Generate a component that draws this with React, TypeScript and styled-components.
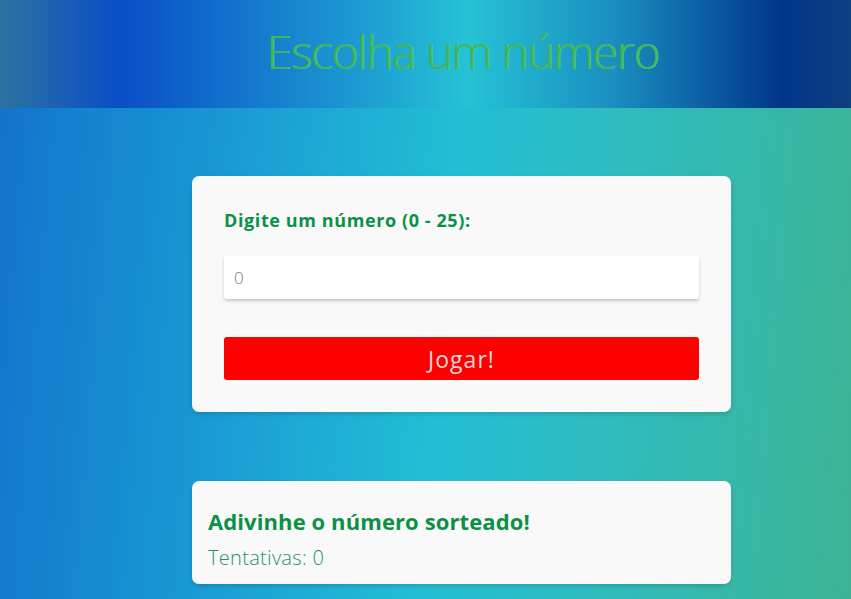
import React from "react";
import styled, { createGlobalStyle } from "styled-components";

const Global = createGlobalStyle`
  html, body { margin: 0; padding: 0; }
  body {
    font-family: "Open Sans", "Noto Sans", sans-serif;
    min-height: 599px;
    background: linear-gradient(95deg, #1272cc 0%, #1a9fd4 30%, #22bed4 52%, #2dbcc0 70%, #3db494 100%);
    background-attachment: fixed;
  }
`;

const Header = styled.header`
  height: 108px;
  background: linear-gradient(90deg, #2c73a0 0%, #0a4ec8 14%, #1a8fd0 38%, #25c2d5 55%, #1a8fc0 72%, #00358a 92%, #0d4080 100%);
  display: flex;
  align-items: center;
  padding-left: 74px;
  justify-content: center;
`;

const Title = styled.h1`
  margin: 0 0 6px;
  font-family: "Open Sans", sans-serif;
  font-weight: 300;
  font-size: 46px;
  letter-spacing: -1.3px;
  color: #45b25a;
  text-shadow: 1px 0 0 #3fcf6a;
`;

const Main = styled.main`
  display: flex;
  flex-direction: column;
  gap: 69px;
  width: 539px;
  margin-left: 192px;
  padding-top: 68px;
`;

const Card = styled.section<{ $pad: string }>`
  background: #f9f9f9;
  border-radius: 7px;
  padding: ${(p) => p.$pad};
  box-shadow: 0 2px 4px rgba(0, 0, 0, 0.15);
  display: flex;
  flex-direction: column;
`;

const Label = styled.label`
  font-family: "Open Sans", sans-serif;
  font-weight: 700;
  font-size: 18px;
  letter-spacing: 0.6px;
  line-height: 24px;
  color: #0a9146;
  margin-bottom: 24px;
`;

const Input = styled.input`
  height: 43px;
  border: none;
  border-radius: 3px;
  background: #ffffff;
  box-shadow: 0 2px 3px rgba(0, 0, 0, 0.2);
  padding: 0 10px;
  font-family: "Open Sans", sans-serif;
  font-size: 17px;
  font-weight: 300;
  color: #555;
  outline: none;
  margin-bottom: 38px;
  &::placeholder { color: #7a7a7a; }
`;

const Button = styled.button`
  height: 43px;
  border: none;
  border-radius: 3px;
  background: #ff0000;
  color: #e6d6d8;
  font-family: "Open Sans", sans-serif;
  font-size: 23px;
  letter-spacing: 1px;
  font-weight: 400;
  cursor: pointer;
`;

const Heading = styled.h2`
  margin: 0 0 9px;
  font-family: "Open Sans", sans-serif;
  font-weight: 700;
  font-size: 22px;
  letter-spacing: 0.1px;
  line-height: 30px;
  color: #0a9146;
`;

const Attempts = styled.p`
  margin: 0;
  font-family: "Open Sans", sans-serif;
  font-weight: 300;
  font-size: 20px;
  letter-spacing: 0.3px;
  line-height: 26px;
  color: #1a9470;
`;

export default function App() {
  return (
    <>
      <Global />
      <Header>
        <Title>Escolha um número</Title>
      </Header>
      <Main>
        <Card $pad="32px 32px 32px">
          <Label htmlFor="num">Digite um número (0 - 25):</Label>
          <Input id="num" type="number" placeholder="0" />
          <Button>Jogar!</Button>
        </Card>
        <Card $pad="25px 16px 13px">
          <Heading>Adivinhe o número sorteado!</Heading>
          <Attempts>Tentativas: 0</Attempts>
        </Card>
      </Main>
    </>
  );
}
